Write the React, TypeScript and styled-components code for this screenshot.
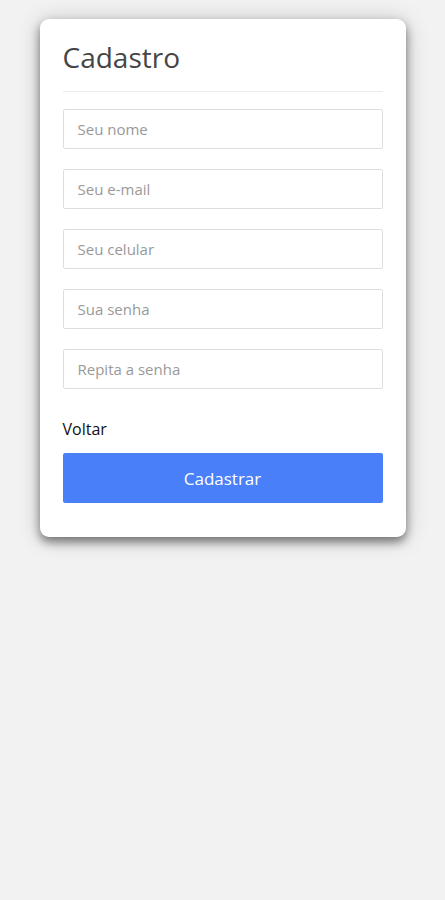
import React from "react";
import styled, { createGlobalStyle } from "styled-components";

const Global = createGlobalStyle`
  html, body { margin: 0; padding: 0; background: #f2f2f2; }
  body { font-family: "Open Sans", "Noto Sans", sans-serif; }
  * { box-sizing: border-box; }
`;

const Page = styled.div`
  min-height: 900px;
  display: flex;
  justify-content: center;
  align-items: flex-start;
  padding-top: 19px;
`;

const Card = styled.form`
  width: 366px;
  background: #fff;
  border-radius: 9px;
  box-shadow: 0 5px 10px rgba(0, 0, 0, 0.45), 0 2px 22px rgba(0, 0, 0, 0.22);
  padding: 19px 23px 34px;
  display: flex;
  flex-direction: column;
`;

const Title = styled.h1`
  margin: 0;
  font-size: 28px;
  font-weight: 400;
  color: #454545;
  line-height: 38px;
  padding-bottom: 15px;
  border-bottom: 1px solid #ececec;
  margin-bottom: 17px;
`;

const Fields = styled.div`
  display: flex;
  flex-direction: column;
  gap: 20px;
`;

const Input = styled.input`
  width: 100%;
  height: 40px;
  border: 1px solid #dedede;
  border-radius: 2px;
  padding: 0 14px;
  font-family: "Open Sans", sans-serif;
  font-size: 15px;
  color: #333;
  outline: none;
  &::placeholder { color: #999; }
`;

const BackLink = styled.a`
  margin-top: 29px;
  font-size: 16px;
  font-weight: 500;
  color: #111;
  line-height: 23px;
  text-decoration: none;
`;

const Submit = styled.button`
  margin-top: 12px;
  height: 50px;
  width: 100%;
  border: none;
  border-radius: 2px;
  background: #4a7ffa;
  color: #fff;
  font-family: "Open Sans", sans-serif;
  font-size: 17px;
`;

export default function App() {
  return (
    <>
      <Global />
      <Page>
        <Card onSubmit={(e) => e.preventDefault()}>
          <Title>Cadastro</Title>
          <Fields>
            <Input placeholder="Seu nome" />
            <Input placeholder="Seu e-mail" />
            <Input placeholder="Seu celular" />
            <Input placeholder="Sua senha" type="password" />
            <Input placeholder="Repita a senha" type="password" />
          </Fields>
          <BackLink href="#">Voltar</BackLink>
          <Submit type="submit">Cadastrar</Submit>
        </Card>
      </Page>
    </>
  );
}
